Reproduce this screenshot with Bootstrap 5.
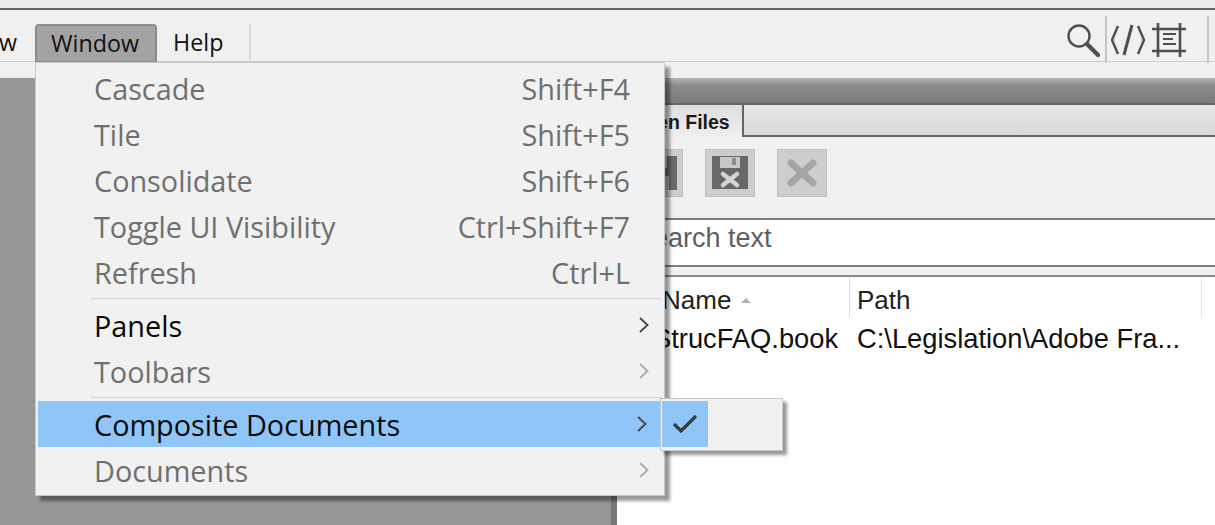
<!DOCTYPE html>
<html lang="en">
<head>
  <meta charset="UTF-8">
  <title>Window menu</title>
  <link href="https://cdn.jsdelivr.net/npm/bootstrap@5.3.0/dist/css/bootstrap.min.css" rel="stylesheet">
  <style>
    html, body { height: 525px; overflow: hidden; }
    body { background: #f0f0f0; font-family: "Open Sans", sans-serif; position: relative; }
    .top-strip { height: 8px; background: #ececec; }
    .app-bar { height: 54px; background: #f0f0f0; border-top: 2px solid #636363; border-bottom: 1px solid #cfcfcf; padding-top: 14px; font-size: 23.3px; color: #111; }
    .bar-cut { width: 35px; overflow: hidden; text-align: right; line-height: 37px; padding-right: 18px; white-space: nowrap; direction: rtl; }
    .bar-item { height: 38px; line-height: 37px; padding: 0 16px; }
    .bar-active { width: 122px; background: #a3a3a3; border: 2px solid #8c8c8c; border-bottom-width: 1px; border-radius: 4px 4px 0 0; line-height: 35px; padding: 0 14px; }
    .bar-help { width: 94px; border-right: 2px solid #d8d8d8; }
    .tool-side { padding-right: 6px; margin-top: -8px; height: 47px; }
    .tool-div { width: 2px; height: 47px; background: #c4c4c4; }
    .find-icon { margin-right: 5px; }
    .code-icon { margin-left: 3px; margin-right: 6px; }
    .frame-icon { margin-right: 21px; }
    .work-row { height: 463px; }
    .left-gap { width: 611px; background: #979797; margin-top: 16px; }
    .left-edge { width: 6px; background: #777; margin-top: 16px; }
    .side-panel { margin-top: 16px; background: #fff; font-family: "Liberation Sans", Arial, sans-serif; }
    .panel-title { height: 27px; background: linear-gradient(#b5b5b5, #8b8b8b 30%, #7c7c7c); border-bottom: 2px solid #666; }
    .tab-row { height: 32px; background: linear-gradient(#e6e6e6, #d9d9d9); border-bottom: 2px solid #666; }
    .tab-on { width: 127px; height: 32px; background: linear-gradient(#dedede, #efefef); border-right: 2px solid #666; font-weight: 700; font-size: 19.5px; line-height: 35px; padding-left: 13px; color: #1a1a1a; white-space: nowrap; }
    .tool-row { height: 81px; background: #f0f0f0; padding: 12px 0 0 16px; gap: 22px; }
    .tool-btn { width: 50px; height: 48px; background: #cdcdcd; border: 1px solid #c2c2c2; display: flex; align-items: center; justify-content: center; }
    .tool-btn svg { filter: blur(.6px); }
    .search-box { height: 49px; border-top: 2px solid #7c7c7c; border-bottom: 2px solid #7c7c7c; font-size: 27px; line-height: 37px; padding-left: 18px; color: #5f5f5f; white-space: nowrap; }
    .strip-gap { height: 10px; background: #f0f0f0; border-bottom: 2px solid #8a8a8a; }
    .col-head { height: 40px; font-size: 26px; line-height: 47px; color: #222; }
    .col-name { width: 233px; padding-left: 45px; border-right: 1px solid #d9d9d9; white-space: nowrap; }
    .col-path { width: 352px; padding-left: 7px; border-right: 1px solid #e4e4e4; white-space: nowrap; }
    .sort-mark { display: inline-block; width: 0; height: 0; border: 5px solid transparent; border-top-width: 0; border-bottom-color: #b0b0b0; margin: 0 0 6px 10px; }
    .file-row { font-size: 27.3px; line-height: 43px; color: #111; }
    .file-name { width: 233px; padding-left: 36px; white-space: nowrap; }
    .file-path { padding-left: 7px; white-space: nowrap; }

    .win-menu.dropdown-menu { display: block; left: 35px; top: 62px; width: 630px; height: 434px; padding: 2px; margin: 0; min-width: 0; background: #f1f1f1; border: 1px solid #c6c6c6; border-radius: 0; box-shadow: 5px 5px 3px rgba(0,0,0,.4); font-size: 28.8px; }
    .win-menu .dropdown-item { height: 46px; line-height: 46px; padding: 2px 32px 0 56px; color: #0a0a0a; display: flex; align-items: center; }
    .win-menu .dropdown-item.disabled { color: #6f6f6f; }
    .win-menu .dropdown-item.active { background: #8fc6f7; color: #0a0a0a; width: 622px; }
    .win-menu .menu-rule { height: 1px; background: #d6d6d6; margin: 3px 0 3px 52px; }
    .arrow-slot { margin-left: auto; margin-right: -20px; margin-top: -2px; display: flex; }
    .sub-menu.dropdown-menu { display: block; left: 660px; top: 398px; width: 123px; height: 53px; padding: 2px 1px; margin: 0; min-width: 0; background: #f1f1f1; border: 1px solid #c6c6c6; border-radius: 0; box-shadow: 4px 4px 3px rgba(0,0,0,.4); }
    .check-cell { width: 46px; height: 46px; background: #8fc6f7; display: flex; align-items: center; justify-content: center; }
  </style>
</head>
<body>
  <div class="top-strip"></div>
  <div class="app-bar d-flex">
    <div class="bar-cut">w</div>
    <div class="bar-item bar-active">Window</div>
    <div class="bar-item bar-help">Help</div>
    <div class="tool-side ms-auto d-flex align-items-center">
      <svg width="34" height="34" viewBox="0 0 34 34" fill="none" stroke="#4f4f4f" class="find-icon"><circle cx="13" cy="13" r="10.5" stroke-width="2.4"/><path d="M21 21l11 11" stroke-width="4.2" stroke-linecap="round"/></svg>
      <div class="tool-div"></div>
      <svg width="36" height="32" viewBox="0 0 36 32" fill="none" stroke="#4f4f4f" stroke-width="2.4" class="code-icon"><path d="M8 2L2 16l6 14"/><path d="M28 2l6 14-6 14"/><path d="M22 1l-8 30" stroke-width="3"/></svg>
      <svg width="34" height="34" viewBox="0 0 34 34" fill="none" stroke="#4f4f4f" class="frame-icon"><path d="M6 0v34M28 0v34M0 6h34M0 28h34" stroke-width="2.6"/><path d="M11 11h13M11 16h10M11 21h13" stroke-width="2"/></svg>
      <div class="tool-div"></div>
    </div>
  </div>

  <div class="work-row d-flex">
    <div class="left-gap flex-shrink-0"></div>
    <div class="left-edge flex-shrink-0"></div>
    <div class="side-panel flex-grow-1 d-flex flex-column">
      <div class="panel-title"></div>
      <div class="tab-row d-flex"><div class="tab-on">Open Files</div></div>
      <div class="tool-row d-flex">
        <div class="tool-btn">
          <svg width="38" height="34" viewBox="0 0 38 34"><path d="M0 0h38v34H0z" fill="#6a6a6a"/><path d="M8 0h20v12H8z" fill="#bdbdbd"/><path d="M8 20h22v14H8z" fill="#a9a9a9"/></svg>
        </div>
        <div class="tool-btn">
          <svg width="36" height="34" viewBox="0 0 36 34"><path d="M0 0h36v33H0z" fill="#686868"/><path d="M8 1h20v11H8z" fill="#c8c8c8"/><path d="M20 2h4v7h-4z" fill="#8c8c8c"/><path d="M11 18l14 11M25 18L11 29" stroke="#d4d4d4" stroke-width="4.5" stroke-linecap="round"/></svg>
        </div>
        <div class="tool-btn">
          <svg width="32" height="28" viewBox="0 0 32 28"><path d="M5 4l22 20M27 4L5 24" stroke="#a5a5a5" stroke-width="7" stroke-linecap="round"/></svg>
        </div>
      </div>
      <div class="search-box">Search text</div>
      <div class="strip-gap"></div>
      <div class="col-head d-flex">
        <div class="col-name">Name<span class="sort-mark"></span></div>
        <div class="col-path">Path</div>
      </div>
      <div class="file-row d-flex">
        <div class="file-name">StrucFAQ.book</div>
        <div class="file-path">C:\Legislation\Adobe Fra...</div>
      </div>
    </div>
  </div>

  <div class="dropdown-menu win-menu">
    <a class="dropdown-item disabled">Cascade<span class="ms-auto">Shift+F4</span></a>
    <a class="dropdown-item disabled">Tile<span class="ms-auto">Shift+F5</span></a>
    <a class="dropdown-item disabled">Consolidate<span class="ms-auto">Shift+F6</span></a>
    <a class="dropdown-item disabled">Toggle UI Visibility<span class="ms-auto">Ctrl+Shift+F7</span></a>
    <a class="dropdown-item disabled">Refresh<span class="ms-auto">Ctrl+L</span></a>
    <div class="menu-rule"></div>
    <a class="dropdown-item">Panels
      <span class="arrow-slot"><svg width="12" height="18" viewBox="0 0 12 18" fill="none" stroke="#444" stroke-width="1.8"><path d="M2 2l7.5 7L2 16"/></svg></span></a>
    <a class="dropdown-item disabled">Toolbars
      <span class="arrow-slot"><svg width="12" height="18" viewBox="0 0 12 18" fill="none" stroke="#aaa" stroke-width="1.8"><path d="M2 2l7.5 7L2 16"/></svg></span></a>
    <div class="menu-rule"></div>
    <a class="dropdown-item active">Composite Documents
      <span class="arrow-slot"><svg width="12" height="18" viewBox="0 0 12 18" fill="none" stroke="#444" stroke-width="1.8"><path d="M2 2l7.5 7L2 16"/></svg></span></a>
    <a class="dropdown-item disabled">Documents
      <span class="arrow-slot"><svg width="12" height="18" viewBox="0 0 12 18" fill="none" stroke="#aaa" stroke-width="1.8"><path d="M2 2l7.5 7L2 16"/></svg></span></a>
  </div>

  <div class="dropdown-menu sub-menu">
    <div class="check-cell">
      <svg width="26" height="20" viewBox="0 0 26 20" fill="none" stroke="#37393c" stroke-width="3.2"><path d="M2 10l7 7L24 2"/></svg>
    </div>
  </div>

  <script src="https://cdn.jsdelivr.net/npm/bootstrap@5.3.0/dist/js/bootstrap.bundle.min.js"></script>
</body>
</html>
